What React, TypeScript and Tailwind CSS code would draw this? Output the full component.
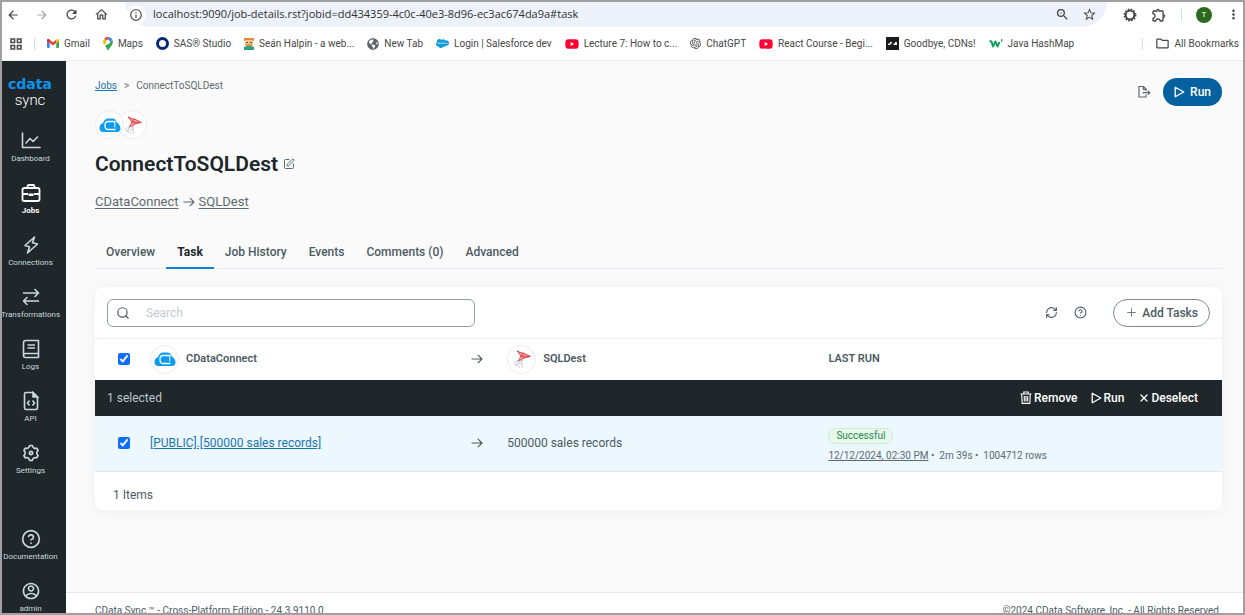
import type { ReactNode } from 'react';
import {
  MdArrowBack,
  MdArrowForward,
  MdInfoOutline,
  MdMoreVert,
  MdOutlineExtension,
  MdOutlineFolder,
  MdOutlineHome,
  MdRefresh,
  MdStarBorder,
  MdZoomOut,
} from 'react-icons/md';
import { FaGlobeAmericas, FaSalesforce, FaYoutube } from 'react-icons/fa';
import { SiOpenai } from 'react-icons/si';
import { RiAccountCircleLine, RiSettings3Line } from 'react-icons/ri';
import { CircleHelp, Plus, RefreshCw, Search, SquarePen, X } from 'lucide-react';

/* ---------- icons ---------- */

function AppsIcon() {
  return (
    <svg viewBox="0 0 12 12" className="size-3" fill="none" stroke="#474747" strokeWidth="1.5">
      <path d="M1 1h3.6v3.6H1zM7.4 1H11v3.6H7.4zM1 7.4h3.6V11H1zM7.4 7.4H11V11H7.4z" />
    </svg>
  );
}

function GmailIcon() {
  return (
    <svg viewBox="0 0 24 18" className="h-[9px] w-3">
      <path d="M0 3v13.5C0 17.300.7 18 1.500 18H5.500V8z" fill="#4285f4" />
      <path d="M18.500 8v10h4c.8 0 1.500-.7 1.500-1.500V3z" fill="#34a853" />
      <path d="M5.500 8V1.500L12 6.500l6.500-5V8L12 13z" fill="#ea4335" />
      <path d="M18.500 1.500V8L24 4V2.500C24 .2 21.500-.8 19.500.7z" fill="#fbbc04" />
      <path d="M0 2.500V4l5.500 4V1.500L4.500.7C2.500-.8 0 .2 0 2.500z" fill="#c5221f" />
    </svg>
  );
}

function MapsIcon() {
  return (
    <svg viewBox="0 0 18 26" className="h-[14px] w-[10px]">
      <path d="M2.100 3.100A9 9 0 0 1 12 .5L6.200 6.700z" fill="#ea4335" />
      <path d="M12 .5L6 7.500a3.500 3.500 0 0 1 5.800 3.900L17 5C15.900 2.800 14.200 1.200 12 .5z" fill="#4285f4" />
      <path d="M2.100 3.100A9 9 0 0 0 1.700 14L6.500 11.300A3.500 3.500 0 0 1 6.200 6.700z" fill="#fbbc04" />
      <path d="M17 5l-5.300 6.400-8.500 4.800C6 20 7.500 21.500 9 26c2-6 9-9.500 9-17 0-1.400-.4-2.900-1-4z" fill="#34a853" />
      <circle cx="9" cy="9" r="3.400" fill="#fff" />
    </svg>
  );
}

function AvatarIcon() {
  return (
    <svg viewBox="0 0 10 12" className="h-3 w-[10px]">
      <path d="M0 0h10v3H0z" fill="#e08a3c" />
      <path d="M1 2h8v6H1z" fill="#f4c795" />
      <path d="M2 4h2v1H2zM6 4h2v1H6z" fill="#6b4a2b" />
      <path d="M2 6h6v2H2z" fill="#e9963f" />
      <path d="M0 9l3-1h4l3 1v3H0z" fill="#2fa084" />
    </svg>
  );
}

function CdnIcon() {
  return (
    <svg viewBox="0 0 13 13" className="size-[13px]">
      <path d="M0 0h13v13H0z" fill="#1b1b1b" />
      <path d="M2 8V6.500h2V5h2v1.500H4.500V8zM7.500 8V6.500H9V5h2v3z" fill="#fff" />
    </svg>
  );
}

function HashMapIcon() {
  return (
    <svg viewBox="0 0 14 10" className="h-[10px] w-[14px]" fill="none" stroke="#12a05c">
      <path d="M.5 2l2 .5L4 7.500l2.500-5L8.500 7.500l2-4.500" strokeWidth="2" strokeLinejoin="round" />
      <path d="M12.700 0v3" strokeWidth="1.200" />
    </svg>
  );
}

function LoaderIcon() {
  return (
    <svg viewBox="0 0 14 14" className="size-[14px]" fill="none" stroke="#3c3c3c">
      <circle cx="7" cy="7" r="4.300" strokeWidth="1.800" />
      <circle cx="7" cy="7" r="5.700" strokeWidth="1.500" strokeDasharray="1.600 1.380" />
    </svg>
  );
}

function DashboardIcon() {
  return (
    <svg viewBox="0 0 20 20" className="size-5" fill="none" stroke="currentColor" strokeWidth="1.600">
      <path d="M1.500 2v14.500H19" strokeLinecap="round" strokeLinejoin="round" />
      <path d="M5 12l4-4.500 3 3L16.500 6" strokeLinecap="round" strokeLinejoin="round" />
    </svg>
  );
}

function JobsIcon() {
  return (
    <svg viewBox="0 0 20 20" className="size-5" fill="none" stroke="currentColor" strokeWidth="1.800">
      <rect x="1.500" y="5" width="17" height="13" rx="1.800" />
      <path d="M6.500 5V3.500C6.500 2.700 7 2 8 2h4c1 0 1.500.7 1.500 1.500V5M1.500 11H7M13 11h5.500" />
      <path d="M7.500 10.500h5v2.500h-5z" fill="currentColor" stroke="none" />
    </svg>
  );
}

function ConnectionsIcon() {
  return (
    <svg viewBox="0 0 20 20" className="size-5" fill="none" stroke="currentColor" strokeWidth="1.600">
      <path d="M13.500 2L4 10.500l4.500 1.200L6.500 18 16.500 9l-5-1.200z" strokeLinejoin="round" />
    </svg>
  );
}

function TransformationsIcon() {
  return (
    <svg viewBox="0 0 20 20" className="size-5" fill="none" stroke="currentColor" strokeWidth="1.600">
      <path d="M2.500 6h15M14 2.500L17.500 6 14 9.500M17.500 14h-15M6 10.500L2.500 14 6 17.500" strokeLinecap="round" strokeLinejoin="round" />
    </svg>
  );
}

function LogsIcon() {
  return (
    <svg viewBox="0 0 20 20" className="size-5" fill="none" stroke="currentColor" strokeWidth="1.600">
      <path d="M17.500 14.500h-13a2 2 0 0 0 0 4h13V1.500h-13A2 2 0 0 0 2.500 3.500v13" strokeLinejoin="round" />
      <path d="M6.500 6h7.500M6.500 9h7.500" />
    </svg>
  );
}

function ApiIcon() {
  return (
    <svg viewBox="0 0 20 20" className="size-5" fill="none" stroke="currentColor" strokeWidth="1.600">
      <path d="M12 1.500H5A1.500 1.500 0 0 0 3.500 3v14A1.500 1.500 0 0 0 5 18.500h10a1.500 1.500 0 0 0 1.500-1.500V6z" />
      <path d="M12 1.500V6h4.500z" fill="currentColor" />
      <path d="M8.500 9.500L6.500 12l2 2.500M11.500 9.500l2 2.500-2 2.500" />
    </svg>
  );
}

function ExportIcon() {
  return (
    <svg viewBox="0 0 14 14" className="size-[14px]" fill="none" stroke="currentColor" strokeWidth="1.200">
      <path d="M9 9.500v2.500H2V1.500h4.500L9 4v2" />
      <path d="M6.300 1.500V4.300H9M5.500 7.700h7.200M10.800 5.700l2 2-2 2" />
    </svg>
  );
}

function ArrowIcon() {
  return (
    <svg viewBox="0 0 12 12" className="size-3" fill="none" stroke="currentColor" strokeWidth="1.100">
      <path d="M.5 6h10.500M6.800 1.800L11 6 6.800 10.200" strokeLinejoin="round" />
    </svg>
  );
}

function PlayIcon() {
  return (
    <svg viewBox="0 0 11 12" className="h-3 w-[11px]" fill="none" stroke="currentColor" strokeWidth="1.300">
      <path d="M1.200 1.200v9.600L9.800 6z" strokeLinejoin="round" />
    </svg>
  );
}

function TrashIcon() {
  return (
    <svg viewBox="0 0 12 13" className="h-[13px] w-3" fill="none" stroke="currentColor" strokeWidth="1.100">
      <path d="M.5 3h11M3.800 3V1h4.400v2M1.700 3l.5 9.400h7.600l.5-9.400M4.300 5v5.500M6 5v5.500M7.700 5v5.500" />
    </svg>
  );
}

function ConnectCloud() {
  return (
    <svg viewBox="0 0 22 14" className="h-[14px] w-[22px]">
      <path
        d="M4.500 14A4 4 0 0 1 .5 10C.5 7.500 2 5.700 4 5.300 4.800 2 6.800.5 9.500.5h4C15.500.5 17 1.700 17.500 4 20 6 21.500 8 21.500 10.500c0 2-1.500 3.500-3.500 3.500z"
        fill="#0a9bf5"
      />
      <path d="M16.500 3.500H9C7 3.500 6 5 6 7.500s1 4 3 4h7.500" fill="none" stroke="#fff" strokeWidth="1.300" />
      <path d="M9.600 5.700h5.600v3.600H9.600z" fill="#0a9bf5" />
      <path d="M15.800 3v6.500" stroke="#fff" strokeWidth="1" />
    </svg>
  );
}

function SqlServerMark() {
  return (
    <svg viewBox="0 0 18 18" className="size-[18px]" fill="none">
      <path d="M4 .8l3 1.700 3.500.5 6.800 3.500-5 1.300L5.500 11l2-4.500z" fill="#f0a9ab" />
      <path d="M4 .8l4 2 2.500.2M4 .8l4 5L5.500 11l6-3.200 5.800-1.300-6.800-3.500-2.500 2.800 9.300.7M8 5.800l3.500 2" stroke="#dc3b42" strokeWidth=".9" />
      <path d="M8 9.700c-3 .6-6 2-6.500 4 .3 2 3.500 2 5.500 3.500M4 12.500l6-2.500M3 14.500l6-1.500M9 10.500v6.500l1 .5" stroke="#aaadaf" strokeWidth=".8" strokeDasharray="2 .6" />
    </svg>
  );
}

/* ---------- browser chrome ---------- */

interface Bookmark {
  label: string;
  icon: ReactNode;
}

const bookmarks: Bookmark[] = [
  { label: 'Gmail', icon: <GmailIcon /> },
  { label: 'Maps', icon: <MapsIcon /> },
  { label: 'SAS® Studio', icon: <span className="size-[13px] rounded-full border-[3px] border-[#05287a]" /> },
  { label: 'Seán Halpin - a web...', icon: <AvatarIcon /> },
  { label: 'New Tab', icon: <FaGlobeAmericas size={12} color="#5f6368" /> },
  { label: 'Login | Salesforce dev', icon: <FaSalesforce size={13} color="#0d9dda" /> },
  { label: 'Lecture 7: How to c...', icon: <FaYoutube size={14} color="#f03" /> },
  { label: 'ChatGPT', icon: <SiOpenai size={11} color="#444" /> },
  { label: 'React Course - Begi...', icon: <FaYoutube size={14} color="#f03" /> },
  { label: 'Goodbye, CDNs!', icon: <CdnIcon /> },
  { label: 'Java HashMap', icon: <HashMapIcon /> },
];

function BrowserBar() {
  return (
    <header className="shrink-0 border-b border-[#f0f0f0] bg-white text-[#474747]">
      <div className="flex h-[25px] items-center pr-[2px]">
        <div className="flex w-[123px] items-center gap-[15px] pl-1">
          <button aria-label="Back"><MdArrowBack size={14} /></button>
          <button aria-label="Forward" className="text-[#a8a8a8]"><MdArrowForward size={14} /></button>
          <button aria-label="Reload"><MdRefresh size={15} /></button>
          <button aria-label="Home"><MdOutlineHome size={15} /></button>
        </div>
        <div className="flex h-full flex-1 items-center rounded-b-full bg-[#ecf1fa] pr-[10px] pl-px">
          <span className="flex size-5 items-center justify-center rounded-full bg-white">
            <MdInfoOutline size={14} />
          </span>
          <input
            aria-label="Address"
            className="ml-[7px] min-w-0 flex-1 bg-transparent font-['Open_Sans',sans-serif] text-[11px] text-[#303030] outline-none"
            defaultValue="localhost:9090/job-details.rst?jobid=dd434359-4c0c-40e3-8d96-ec3ac674da9a#task"
          />
          <button aria-label="Zoom" className="mr-3"><MdZoomOut size={15} /></button>
          <button aria-label="Bookmark this page"><MdStarBorder size={15} /></button>
        </div>
        <div className="flex items-center gap-[14px] pl-4">
          <button aria-label="Extension"><LoaderIcon /></button>
          <button aria-label="Extensions"><MdOutlineExtension size={16} /></button>
          <span className="h-3 w-px bg-[#cfdff7]" />
          <button className="size-4 rounded-full bg-[#2b6a1c] text-[8px] text-white">T</button>
          <button aria-label="Menu"><MdMoreVert size={15} /></button>
        </div>
      </div>
      <nav className="flex h-[33px] items-center pr-1 pl-2 text-[10px] whitespace-nowrap">
        <button aria-label="Apps"><AppsIcon /></button>
        <span className="mx-3 h-3 w-px bg-[#c7dbf7]" />
        <div className="flex items-center gap-[13px]">
          {bookmarks.map((b) => (
            <a key={b.label} href="#" className="flex items-center gap-[5px]">
              {b.icon}
              {b.label}
            </a>
          ))}
        </div>
        <span className="mr-3 ml-auto h-3 w-px bg-[#c7dbf7]" />
        <a href="#" className="flex items-center gap-[5px]">
          <MdOutlineFolder size={15} />
          All Bookmarks
        </a>
      </nav>
    </header>
  );
}

/* ---------- sidebar ---------- */

interface NavItemProps {
  label: string;
  icon: ReactNode;
  active?: boolean;
}

function NavItem({ label, icon, active }: NavItemProps) {
  return (
    <a
      href="#"
      className={`flex h-[52px] shrink-0 flex-col items-center gap-[2px] pr-[7px] text-[8px] leading-3 ${
        active ? 'font-bold text-white' : 'text-[#c9d7de]'
      }`}
    >
      {icon}
      {label}
    </a>
  );
}

function Sidebar() {
  return (
    <aside className="flex w-16 shrink-0 flex-col overflow-hidden bg-[#20272a]">
      <div className="flex h-[70px] shrink-0 flex-col items-center pt-[15px] pr-2">
        <span className="font-['DejaVu_Sans',sans-serif] text-[14px] leading-4 font-bold text-[#0d93ee]">cdata</span>
        <span className="text-[15px] leading-4 font-light text-white">sync</span>
      </div>
      <NavItem label="Dashboard" icon={<DashboardIcon />} />
      <NavItem label="Jobs" icon={<JobsIcon />} active />
      <NavItem label="Connections" icon={<ConnectionsIcon />} />
      <NavItem label="Transformations" icon={<TransformationsIcon />} />
      <NavItem label="Logs" icon={<LogsIcon />} />
      <NavItem label="API" icon={<ApiIcon />} />
      <NavItem label="Settings" icon={<RiSettings3Line size={20} />} />
      <div className="mt-[34px]">
        <NavItem label="Documentation" icon={<CircleHelp size={20} />} />
        <NavItem label="admin" icon={<RiAccountCircleLine size={20} />} />
      </div>
    </aside>
  );
}

/* ---------- job page ---------- */

const tabs = ['Overview', 'Task', 'Job History', 'Events', 'Comments (0)', 'Advanced'];

function Badge({ children }: { children: ReactNode }) {
  return (
    <span className="flex size-[29px] shrink-0 items-center justify-center rounded-full border border-[#e8ecee] bg-white">
      {children}
    </span>
  );
}

function JobHeader() {
  return (
    <div className="flex items-start justify-between">
      <div>
        <div className="flex h-[14px] items-center gap-[7px] text-[10px] text-[#5b6a72]">
          <a href="#" className="text-[#1a76b0] underline">Jobs</a>
          <span>&gt;</span>
          <span>ConnectToSQLDest</span>
        </div>
        <div className="mt-[18px] flex">
          <span className="z-10"><Badge><ConnectCloud /></Badge></span>
          <span className="-ml-[6px]"><Badge><SqlServerMark /></Badge></span>
        </div>
        <div className="mt-[11px] flex items-center gap-[5px]">
          <h1 className="text-[21px] leading-7 font-semibold text-[#20272a]">ConnectToSQLDest</h1>
          <button aria-label="Rename job" className="text-[#5b6a72]"><SquarePen size={12} /></button>
        </div>
        <div className="mt-[14px] flex items-center gap-1 text-[13px] leading-5 text-[#5b6a72]">
          <a href="#" className="underline underline-offset-2">CDataConnect</a>
          <ArrowIcon />
          <a href="#" className="underline underline-offset-2">SQLDest</a>
        </div>
      </div>
      <div className="flex items-center gap-3">
        <button aria-label="Export" className="text-[#5b6a72]"><ExportIcon /></button>
        <button className="flex h-7 items-center gap-[5px] rounded-full bg-[#0561a0] px-[11px] text-[12px] font-medium text-white">
          <PlayIcon />
          Run
        </button>
      </div>
    </div>
  );
}

function TaskTable() {
  return (
    <section className="mt-[18px] overflow-hidden rounded-lg bg-white text-[12px] text-[#4c5b63] shadow-[0_2px_14px_rgba(0,0,0,0.05)]">
      <div className="flex h-[51px] items-center px-3">
        <label className="flex h-7 w-1/3 items-center gap-4 rounded-md border border-[#8f9ea6] px-2">
          <Search size={14} className="shrink-0" />
          <input
            aria-label="Search"
            placeholder="Search"
            className="min-w-0 flex-1 bg-transparent outline-none placeholder:text-[#bfcad0]"
          />
        </label>
        <button aria-label="Refresh" className="ml-auto"><RefreshCw size={13} /></button>
        <button aria-label="Help" className="ml-4"><CircleHelp size={13} /></button>
        <button className="ml-[26px] flex h-7 items-center gap-1 rounded-full border border-[#7d8b93] px-[11px] font-medium">
          <Plus size={13} strokeWidth={1.5} />
          Add Tasks
        </button>
      </div>
      <table className="w-full table-fixed border-collapse text-left">
        <colgroup>
          <col className="w-[55px]" />
          <col className="w-[28.5%]" />
          <col className="w-9" />
          <col className="w-[28.5%]" />
          <col />
        </colgroup>
        <thead>
          <tr className="h-[41px] border-t border-[#e9f0f2] text-[11px]">
            <th className="pl-[23px]">
              <input type="checkbox" aria-label="Select all" defaultChecked className="block size-3 accent-[#0d6efd]" />
            </th>
            <th className="font-semibold">
              <span className="flex items-center gap-[7px]"><Badge><ConnectCloud /></Badge>CDataConnect</span>
            </th>
            <th><ArrowIcon /></th>
            <th className="font-semibold">
              <span className="flex items-center gap-[7px]"><Badge><SqlServerMark /></Badge>SQLDest</span>
            </th>
            <th className="font-semibold">LAST RUN</th>
          </tr>
        </thead>
        <tbody>
          <tr className="h-9 bg-[#20272a]">
            <td colSpan={5} className="pr-6 pl-3">
              <div className="flex items-center gap-[14px] font-medium text-white">
                <span className="mr-auto font-normal text-[#b9c6cc]">1 selected</span>
                <button className="flex items-center gap-[2px]"><TrashIcon />Remove</button>
                <button className="flex items-center gap-px"><PlayIcon />Run</button>
                <button className="flex items-center gap-px"><X size={12} strokeWidth={2.5} />Deselect</button>
              </div>
            </td>
          </tr>
          <tr className="h-14 border-b border-[#dce8ee] bg-[#ecf7fe]">
            <td className="pl-[23px]">
              <input type="checkbox" aria-label="Select task" defaultChecked className="block size-3 accent-[#0d6efd]" />
            </td>
            <td><a href="#" className="text-[#1a76b0] underline">[PUBLIC].[500000 sales records]</a></td>
            <td><ArrowIcon /></td>
            <td>500000 sales records</td>
            <td className="pt-[6px] text-[10px] leading-4">
              <span className="inline-block rounded-full border border-[#cdeed8] bg-[#e8f8ec] px-[7px] leading-[14px] text-[#1f8a4c]">
                Successful
              </span>
              <div className="mt-1 text-[#5b6a72]">
                <a href="#" className="underline">12/12/2024, 02:30 PM</a> •&nbsp; 2m 39s •&nbsp; 1004712 rows
              </div>
            </td>
          </tr>
        </tbody>
      </table>
      <p className="px-[18px] pt-[14px] pb-[6px] leading-[18px]">1 Items</p>
    </section>
  );
}

export default function App() {
  return (
    <div className="flex h-screen flex-col overflow-hidden border-2 border-[#a0a0a0] bg-white font-[Roboto,sans-serif]">
      <BrowserBar />
      <div className="flex min-h-0 flex-1">
        <Sidebar />
        <div className="flex min-w-0 flex-1 flex-col">
          <main className="min-h-0 flex-1 bg-[#fafafa] pt-[17px] pr-[21px] pl-[29px]">
            <JobHeader />
            <nav className="mt-[25px] flex border-b border-[#e6edf0] text-[12px] font-medium text-[#4c5b63]">
              {tabs.map((tab) => (
                <button
                  key={tab}
                  className={`-mb-px h-8 border-b-2 px-[11px] ${tab === 'Task' ? 'border-[#1384cf] font-bold text-[#20272a]' : 'border-transparent'}`}
                >
                  {tab}
                </button>
              ))}
            </nav>
            <TaskTable />
          </main>
          <footer className="flex h-[21px] shrink-0 justify-between overflow-hidden border-t border-[#e8e8e8] pt-[10px] pr-6 pl-[29px] text-[10px] text-[#4c5b63]">
            <span>CData Sync ™ - Cross-Platform Edition - 24.3.9110.0</span>
            <span>©2024 CData Software, Inc. - All Rights Reserved</span>
          </footer>
        </div>
      </div>
    </div>
  );
}
